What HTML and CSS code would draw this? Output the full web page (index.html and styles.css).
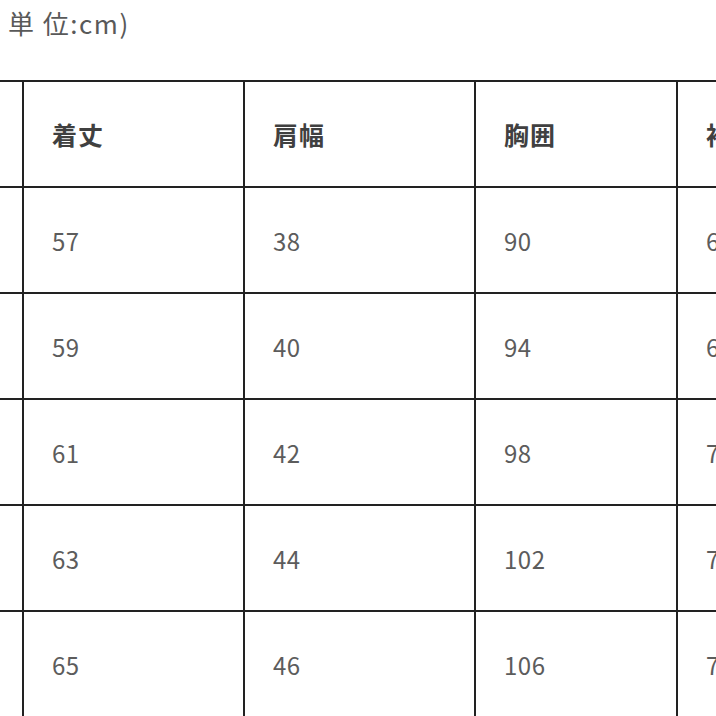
FILE: index.html
```html
<!DOCTYPE html>
<html lang="ja">
<head>
<meta charset="utf-8">
<link rel="stylesheet" href="styles.css">
</head>
<body>
<div class="page">
  <div class="title">単 位:cm)</div>
  <div class="table-wrap">
    <table class="size-table">
      <colgroup>
        <col class="c-size">
        <col class="c-a">
        <col class="c-b">
        <col class="c-c">
        <col class="c-d">
      </colgroup>
      <tr class="head"><td>サイズ</td><td>着丈</td><td>肩幅</td><td>胸囲</td><td>袖丈</td></tr>
      <tr><td>S</td><td>57</td><td>38</td><td>90</td><td>60</td></tr>
      <tr><td>M</td><td>59</td><td>40</td><td>94</td><td>62</td></tr>
      <tr><td>L</td><td>61</td><td>42</td><td>98</td><td>70</td></tr>
      <tr><td>XL</td><td>63</td><td>44</td><td>102</td><td>72</td></tr>
      <tr><td>2XL</td><td>65</td><td>46</td><td>106</td><td>74</td></tr>
    </table>
  </div>
</div>
</body>
</html>
```
FILE: styles.css
```css
html, body {
  margin: 0;
  padding: 0;
  background: #ffffff;
}
.page {
  width: 716px;
  height: 716px;
  overflow: hidden;
  font-family: "Noto Sans CJK JP", "Noto Sans", sans-serif;
}
.title {
  height: 80px;
  box-sizing: border-box;
  padding: 4px 0 0 8px;
  font-size: 26px;
  line-height: 38px;
  letter-spacing: 1.5px;
  color: #595959;
}
.table-wrap {
  overflow: hidden;
  width: 716px;
}
.size-table {
  border-collapse: collapse;
  table-layout: fixed;
  width: 1004px;
  margin-left: -128px;
}
.c-size { width: 150px; }
.c-a { width: 221px; }
.c-b { width: 231px; }
.c-c { width: 202px; }
.c-d { width: 200px; }
.size-table td {
  border: 2px solid #222222;
  height: 104px;
  padding: 0 0 0 28px;
  font-size: 24px;
  color: #5c5c5c;
  vertical-align: middle;
  white-space: nowrap;
  letter-spacing: 0.5px;
}
.size-table tr.head td {
  font-size: 25px;
  font-weight: 700;
  color: #404040;
  letter-spacing: 1px;
}
```
